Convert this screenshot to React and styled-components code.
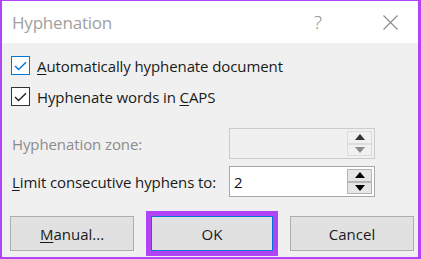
import styled, { createGlobalStyle } from 'styled-components';

const GlobalStyle = createGlobalStyle`
	html, body {
		margin: 0;
		padding: 0;
		background: #ffffff;
	}
	* {
		box-sizing: border-box;
	}
`;

const Frame = styled.div`
	width: 421px;
	height: 259px;
	display: flex;
	flex-direction: column;
	border-style: solid;
	border-color: #b044f6;
	border-width: 1px 3px 2px 2px;
	background: #f0f0f0;
	font-family: 'Open Sans', 'Noto Sans', sans-serif;
	color: #1a1a1a;
	overflow: hidden;
`;

const TitleBar = styled.div`
	height: 42px;
	flex: none;
	display: flex;
	align-items: center;
	background: #ffffff;
	padding: 0 0 0 10px;
`;

const Title = styled.div`
	flex: 1;
	font-size: 17px;
	color: #a0a0a0;
	letter-spacing: -0.2px;
	padding-top: 1px;
`;

const TitleButton = styled.div`
	width: ${(p) => p.$w}px;
	height: 42px;
	margin-right: ${(p) => p.$mr || 0}px;
	display: flex;
	align-items: center;
	justify-content: center;
	color: #8a8a8a;
	font-size: 19px;
	font-weight: 300;
`;

const Body = styled.div`
	flex: 1;
	display: flex;
	flex-direction: column;
	padding: 13px 4px 0 8px;
`;

const CheckRow = styled.label`
	display: flex;
	align-items: center;
	gap: 7px;
	height: 19px;
	margin-left: 1px;
	margin-bottom: ${(p) => p.$mb || 0}px;
	font-size: 15px;
	letter-spacing: -0.1px;
`;

const Box = styled.span`
	width: 19px;
	height: 19px;
	flex: none;
	background: #ffffff;
	border: 1px solid ${(p) => (p.$focus ? '#0078d7' : '#333333')};
	display: flex;
	align-items: center;
	justify-content: center;
`;

const Key = styled.span`
	text-decoration: underline;
	text-underline-offset: 2px;
	text-decoration-thickness: 1px;
`;

const FieldRow = styled.div`
	display: flex;
	align-items: center;
	height: 31px;
	margin-bottom: ${(p) => p.$mb || 0}px;
	padding-left: 2px;
`;

const FieldLabel = styled.div`
	width: 217px;
	font-size: 15px;
	letter-spacing: -0.1px;
	color: ${(p) => (p.$disabled ? '#8c8c8c' : '#1a1a1a')};
`;

const SpinBox = styled.div`
	width: 146px;
	height: 31px;
	display: flex;
	align-items: center;
	border: 1px solid ${(p) => (p.$disabled ? '#cccccc' : '#a8a8a8')};
	background: ${(p) => (p.$disabled ? '#f0f0f0' : '#ffffff')};
	padding: 0 2px 0 4px;
`;

const Value = styled.div`
	flex: 1;
	font-size: 15px;
	color: #111111;
`;

const Spinner = styled.div`
	width: 25px;
	height: 25px;
	display: flex;
	flex-direction: column;
`;

const SpinButton = styled.div`
	flex: 1;
	display: flex;
	align-items: center;
	justify-content: center;
	background: ${(p) => (p.$disabled ? '#f0f0f0' : '#e6e6e6')};
	border: 1px solid ${(p) => (p.$disabled ? '#dcdcdc' : '#b5b5b5')};
`;

const Buttons = styled.div`
	display: flex;
	justify-content: space-between;
	margin-top: 19px;
`;

const Button = styled.button`
	width: ${(p) => (p.$default ? 122 : 124)}px;
	height: 35px;
	background: #e1e1e1;
	border: 1px solid ${(p) => (p.$default ? '#0078d7' : '#adadad')};
	font-family: inherit;
	font-size: 15px;
	color: #1a1a1a;
	padding: 0;
	outline: ${(p) => (p.$default ? '5px solid #b044f6' : 'none')};
	outline-offset: 0;
`;

const Arrow = ({ up, color }) => (
	<svg width="10" height="6" viewBox="0 0 10 6">
		<path d={up ? 'M0 6 L5 0 L10 6 Z' : 'M0 0 L5 6 L10 0 Z'} fill={color} />
	</svg>
);

const Check = ({ color }) => (
	<svg width="13" height="10" viewBox="0 0 13 10">
		<path d="M1 5 L4.6 8.6 L12 1.2" fill="none" stroke={color} strokeWidth="1.4" />
	</svg>
);

const Spin = ({ disabled }) => (
	<Spinner>
		<SpinButton $disabled={disabled}>
			<Arrow up color={disabled ? '#333333' : '#000000'} />
		</SpinButton>
		<SpinButton $disabled={disabled}>
			<Arrow color={disabled ? '#8a8a8a' : '#000000'} />
		</SpinButton>
	</Spinner>
);

const App = () => {
	return (
		<>
			<GlobalStyle />
			<Frame>
				<TitleBar>
					<Title>Hyphenation</Title>
					<TitleButton $w={46} $mr={21}>?</TitleButton>
					<TitleButton $w={56}>
						<svg width="15" height="15" viewBox="0 0 15 15">
							<path d="M0.5 0.5 L14.5 14.5 M14.5 0.5 L0.5 14.5" stroke="#8a8a8a" strokeWidth="1.1" />
						</svg>
					</TitleButton>
				</TitleBar>
				<Body>
					<CheckRow $mb={12}>
						<Box $focus>
							<Check color="#0078d7" />
						</Box>
						<span>
							<Key>A</Key>utomatically hyphenate document
						</span>
					</CheckRow>
					<CheckRow $mb={22}>
						<Box>
							<Check color="#222222" />
						</Box>
						<span>
							Hyphenate words in <Key>C</Key>APS
						</span>
					</CheckRow>
					<FieldRow $mb={7}>
						<FieldLabel $disabled>Hyphenation zone:</FieldLabel>
						<SpinBox $disabled>
							<Value />
							<Spin disabled />
						</SpinBox>
					</FieldRow>
					<FieldRow>
						<FieldLabel>
							<Key>L</Key>imit consecutive hyphens to:
						</FieldLabel>
						<SpinBox>
							<Value>2</Value>
							<Spin />
						</SpinBox>
					</FieldRow>
					<Buttons>
						<Button>
							<Key>M</Key>anual...
						</Button>
						<Button $default>OK</Button>
						<Button>Cancel</Button>
					</Buttons>
				</Body>
			</Frame>
		</>
	);
};

export default App;
